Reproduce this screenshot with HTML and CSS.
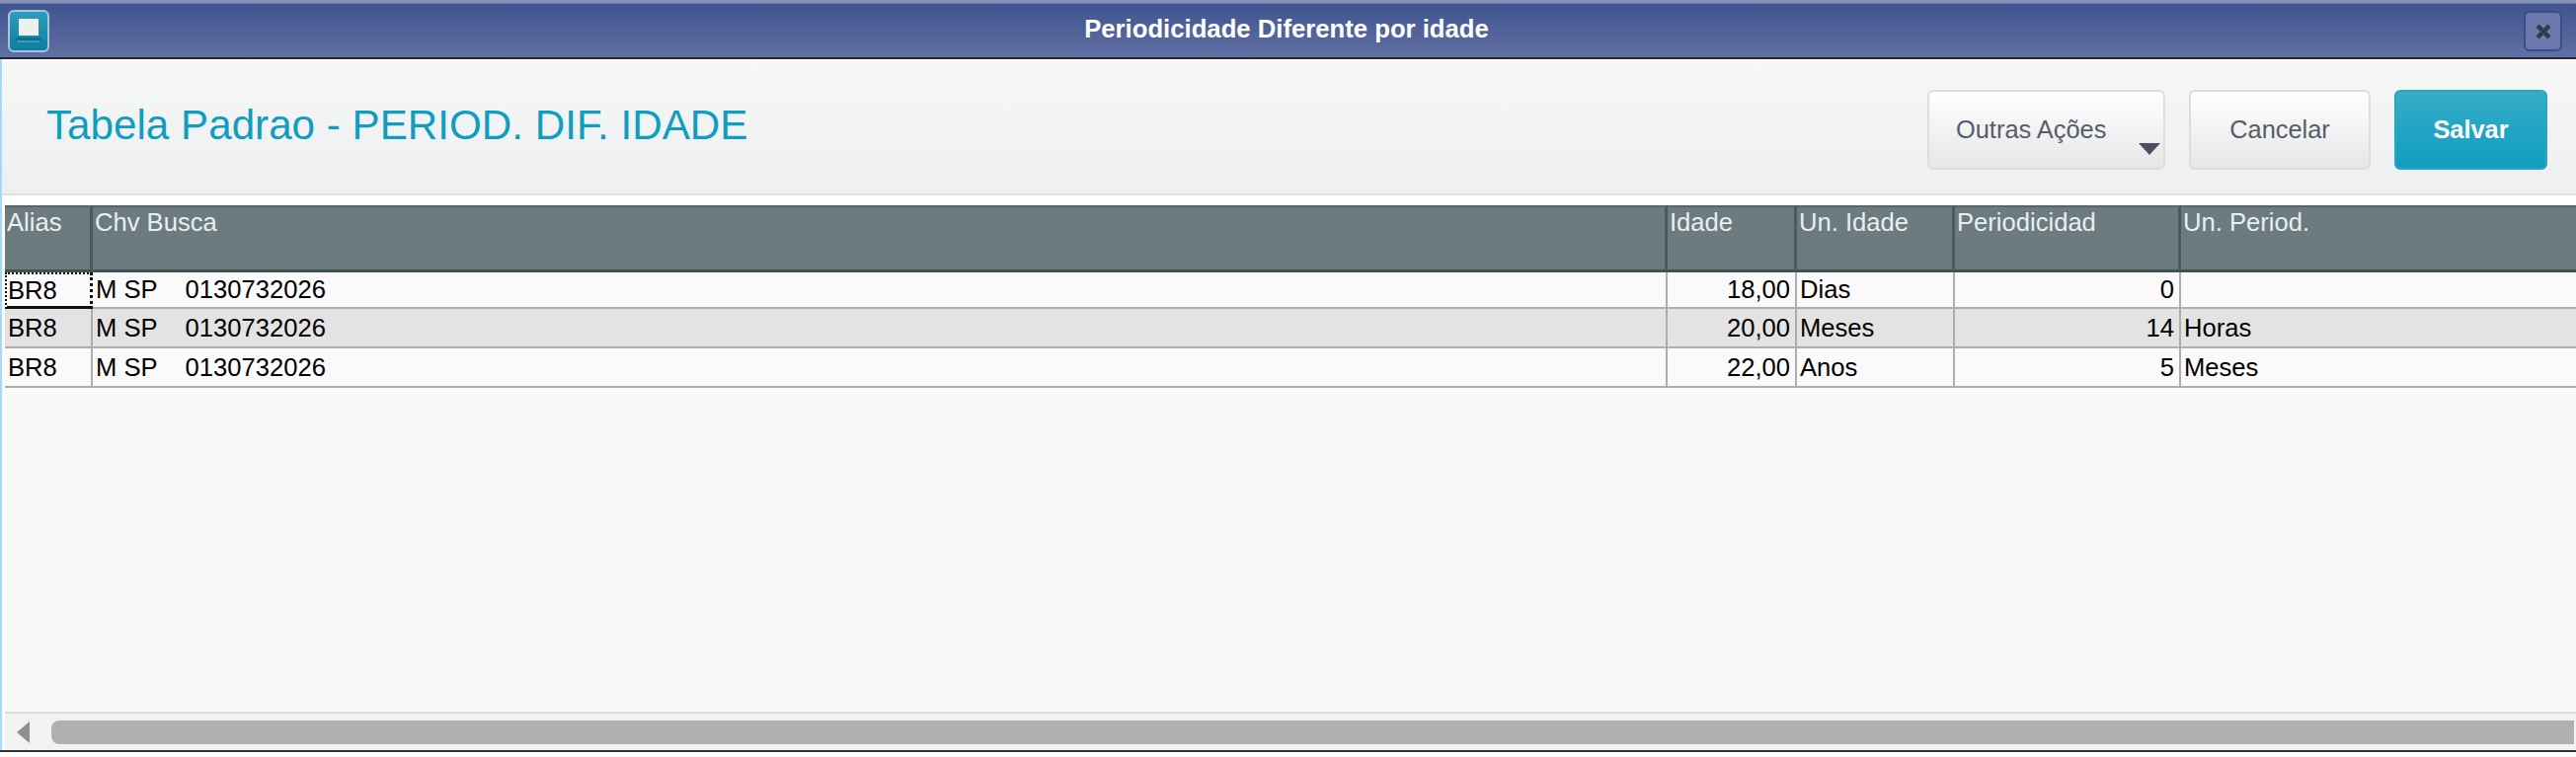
FILE: index.html
```html
<!DOCTYPE html>
<html>
<head>
    <title>Periodicidade Diferente por idade</title>
    <meta name="viewport" content="width=device-width, initial-scale=1">
    <link rel="stylesheet" href="styles.css">
</head>
<body>
    <div class="window">
        <div class="title-bar">
            <div class="app-icon">
                <svg width="30" height="30" viewBox="0 0 30 30">
                    <rect x="5" y="2" width="20" height="17" fill="#eef0f0"/>
                    <path d="M3 21h24l2 5H1z" fill="#0b6f8e"/>
                    <path d="M3 25h24" stroke="#7cc0d2" stroke-width="1"/>
                </svg>
            </div>
            <div class="window-title">Periodicidade Diferente por idade</div>
            <div class="close-btn">
                <svg width="18" height="18" viewBox="0 0 18 18">
                    <path d="M3 3l12 12M15 3L3 15" stroke="#2f3a55" stroke-width="4.5"/>
                </svg>
            </div>
        </div>

        <div class="content">
            <div class="toolbar">
                <h1 class="page-title">Tabela Padrao - PERIOD. DIF. IDADE</h1>
                <div class="actions">
                    <button class="btn btn-menu">Outras Ações<span class="caret"></span></button>
                    <button class="btn btn-cancel">Cancelar</button>
                    <button class="btn btn-save">Salvar</button>
                </div>
            </div>

            <div class="grid-area">
                <table class="grid">
                    <colgroup>
                        <col class="col-alias">
                        <col class="col-chave">
                        <col class="col-idade">
                        <col class="col-unidade">
                        <col class="col-period">
                        <col>
                    </colgroup>
                    <thead>
                        <tr>
                            <th>Alias</th>
                            <th>Chv Busca</th>
                            <th>Idade</th>
                            <th>Un. Idade</th>
                            <th>Periodicidad</th>
                            <th>Un. Period.</th>
                        </tr>
                    </thead>
                    <tbody>
                        <tr class="first">
                            <td class="focused">BR8</td>
                            <td>M SP    0130732026</td>
                            <td class="num">18,00</td>
                            <td>Dias</td>
                            <td class="num">0</td>
                            <td></td>
                        </tr>
                        <tr class="alt">
                            <td>BR8</td>
                            <td>M SP    0130732026</td>
                            <td class="num">20,00</td>
                            <td>Meses</td>
                            <td class="num">14</td>
                            <td>Horas</td>
                        </tr>
                        <tr>
                            <td>BR8</td>
                            <td>M SP    0130732026</td>
                            <td class="num">22,00</td>
                            <td>Anos</td>
                            <td class="num">5</td>
                            <td>Meses</td>
                        </tr>
                    </tbody>
                </table>
            </div>

            <div class="scrollbar">
                <span class="arrow-left"></span>
                <div class="thumb"></div>
            </div>
        </div>
    </div>
</body>
</html>
```

FILE: styles.css
```css
* {
    box-sizing: border-box;
}
html, body {
    margin: 0;
    height: 767px;
    overflow: hidden;
    background: #fff;
}
body {
    font-family: "Liberation Sans", Arial, sans-serif;
}
.window {
    height: 762px;
    display: flex;
    flex-direction: column;
    border-bottom: 2px solid #333;
}

/* title bar */
.title-bar {
    height: 60px;
    flex: none;
    display: flex;
    align-items: center;
    padding: 0 14px 0 8px;
    background: linear-gradient(#8793bb 0, #8793bb 3px, #3f5490 4px, #6170a2 100%);
    border-bottom: 2px solid #23283a;
}
.app-icon {
    width: 42px;
    height: 43px;
    margin-top: 5px;
    display: flex;
    align-items: center;
    justify-content: center;
    background: linear-gradient(#2e9cbc, #0d7fa3);
    border: 2px solid #a9c4d6;
    border-radius: 6px;
}
.window-title {
    flex: 1;
    text-align: center;
    color: #fff;
    font-weight: bold;
    font-size: 25.7px;
}
.close-btn {
    width: 39px;
    height: 41px;
    margin-top: 5px;
    display: flex;
    align-items: center;
    justify-content: center;
    background: #6a79ab;
    border: 2px solid #3c4d86;
    border-radius: 6px;
}

.content {
    flex: 1;
    min-height: 0;
    display: flex;
    flex-direction: column;
    border-left: 2px solid #a8d8f8;
}

/* toolbar */
.toolbar {
    height: 138px;
    flex: none;
    display: flex;
    align-items: center;
    justify-content: space-between;
    padding: 0 29px 4px 45px;
    background: linear-gradient(#f6f7f6, #eeeff1);
    border-bottom: 2px solid #e0e0e0;
    border-top: 1px solid #fff;
}
.page-title {
    margin: 0;
    font-weight: normal;
    font-size: 42.2px;
    color: #0f9dc0;
}
.actions {
    display: flex;
    gap: 24px;
    margin-top: 9px;
}
.btn {
    position: relative;
    height: 81px;
    font-family: inherit;
    font-size: 25.4px;
    color: #565d6b;
    background: linear-gradient(#fff, #e6e6e6);
    border: 2px solid #dddddd;
    border-radius: 6px;
}
.btn-menu {
    width: 241px;
    text-align: left;
    padding: 0 0 0 27px;
}
.btn-cancel {
    width: 184px;
}
.btn-save {
    width: 155px;
    color: #fff;
    font-weight: bold;
    background: linear-gradient(#35adc9, #0f9dc0);
    border-color: #2aa5c3;
}
.caret {
    position: absolute;
    right: 3px;
    bottom: 13px;
    border-left: 11px solid transparent;
    border-right: 11px solid transparent;
    border-top: 12px solid #4b5160;
}

/* grid */
.grid-area {
    flex: 1;
    margin: 10px 0 0 3px;
    background: #f9f9f9;
    border-bottom: 2px solid #d6dcda;
}
.grid {
    width: 100%;
    table-layout: fixed;
    border-collapse: separate;
    border-spacing: 0;
    font-size: 25.6px;
}
.col-alias { width: 89px; }
.col-chave { width: 1595px; }
.col-idade { width: 131px; }
.col-unidade { width: 160px; }
.col-period { width: 229px; }
.grid th {
    height: 68px;
    padding: 0 2px 0 2px;
    text-align: left;
    vertical-align: top;
    font-weight: normal;
    line-height: 30px;
    color: #e9efef;
    background: #6c7b7f;
    border-top: 2px solid #596669;
    border-bottom: 3px solid #465154;
    border-right: 3px solid #4d595c;
}
.grid td {
    height: 40px;
    padding: 0 5px 0 3px;
    color: #000;
    background: #fafafa;
    border-bottom: 2px solid #aeaeae;
    border-right: 2px solid #aeaeae;
    white-space: pre;
}
.grid tr.first td {
    height: 37px;
}
.grid tr.alt td {
    background: #e3e3e3;
}
.grid th:last-child,
.grid td:last-child {
    border-right: none;
}
.grid td.num {
    text-align: right;
}
.grid td.focused {
    padding: 0 3px 0 1px;
    border: 2px dotted #111;
    border-right: 3px dotted #111;
    border-bottom: 3px solid #111;
}

/* horizontal scrollbar */
.scrollbar {
    height: 37px;
    flex: none;
    margin-left: 3px;
    display: flex;
    align-items: center;
    padding-left: 12px;
    background: #f1f2f2;
}
.arrow-left {
    border-top: 11px solid transparent;
    border-bottom: 11px solid transparent;
    border-right: 13px solid #8e9090;
}
.thumb {
    flex: 1;
    height: 24px;
    margin: 0 2px 0 22px;
    background: #b0b0b0;
    border-radius: 8px 0 0 8px;
}
```
